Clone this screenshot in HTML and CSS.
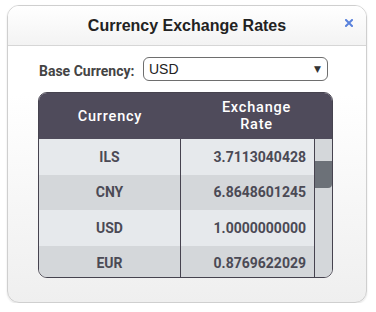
FILE: index.html
```html
<!DOCTYPE html>
<html>
<head>
<meta charset="utf-8">
<link rel="stylesheet" href="styles.css">
</head>
<body>
<div class="dialog">
  <div class="dialog-header">
    <h1 class="title">Currency Exchange Rates</h1>
    <svg class="close" width="8" height="8" viewBox="0 0 8 8"><path d="M1 1L7 7M7 1L1 7" stroke="#5a82dc" stroke-width="2" stroke-linecap="square" fill="none"/></svg>
  </div>
  <div class="dialog-body">
    <div class="base-row">
      <label class="base-label">Base Currency:</label>
      <div class="select"><span>USD</span><span class="arrow">&#9660;</span></div>
    </div>
    <div class="table">
      <div class="thead">
        <div class="th th-cur">Currency</div>
        <div class="th th-rate">Exchange<br>Rate</div>
      </div>
      <div class="tbody">
        <div class="rows">
          <div class="row odd"><div class="cell cur">ILS</div><div class="cell rate">3.7113040428</div></div>
          <div class="row even"><div class="cell cur">CNY</div><div class="cell rate">6.8648601245</div></div>
          <div class="row odd"><div class="cell cur">USD</div><div class="cell rate">1.0000000000</div></div>
          <div class="row even"><div class="cell cur">EUR</div><div class="cell rate">0.8769622029</div></div>
        </div>
        <div class="scrollbar"><div class="thumb"></div></div>
      </div>
    </div>
  </div>
</div>
</body>
</html>
```
FILE: styles.css
```css
html, body {
  margin: 0;
  padding: 0;
  background: #ffffff;
}
body {
  font-family: Roboto, "Liberation Sans", sans-serif;
}
.dialog {
  box-sizing: border-box;
  margin: 5px 0 0 7px;
  width: 360px;
  height: 298px;
  border: 1px solid #cfcfcf;
  border-radius: 12px;
  background: linear-gradient(#ffffff 30%, #efefef);
  box-shadow: 0 1px 2px rgba(0,0,0,0.12);
  overflow: hidden;
}
.dialog-header {
  position: relative;
  height: 39px;
  border-bottom: 1px solid #d6d6d6;
  background: linear-gradient(#ffffff, #f3f3f3);
  display: flex;
  align-items: center;
  justify-content: center;
}
.title {
  margin: 0;
  font-family: "Liberation Sans", Arial, sans-serif;
  font-size: 16px;
  font-weight: 700;
  color: #222222;
  padding-top: 1px;
}
.close {
  position: absolute;
  right: 13px;
  top: 13px;
}
.dialog-body {
  padding: 11px 0 0 31px;
}
.base-row {
  display: flex;
  align-items: center;
  height: 24px;
}
.base-label {
  font-size: 14px;
  font-weight: 700;
  color: #444444;
  width: 104px;
  padding-top: 4px;
}
.select {
  box-sizing: border-box;
  width: 185px;
  height: 24px;
  border: 1px solid #6e6e6e;
  border-radius: 6px;
  display: flex;
  align-items: center;
  justify-content: space-between;
  padding: 0 6px 0 5px;
  font-family: "Liberation Sans", Arial, sans-serif;
  font-size: 14px;
  color: #222;
  background: #fff;
}
.arrow {
  font-size: 9px;
  color: #333;
  font-family: "DejaVu Sans", sans-serif;
}
.table {
  box-sizing: border-box;
  margin: 11px 0 0 -1px;
  width: 295px;
  height: 186px;
  border: 1px solid #46434f;
  border-radius: 9px;
  overflow: hidden;
  display: flex;
  flex-direction: column;
}
.thead {
  display: flex;
  height: 46px;
  background: #4f4b5b;
  color: #ffffff;
  font-weight: 500;
  font-size: 14.5px;
  letter-spacing: 0.8px;
  line-height: 17px;
}
.th {
  display: flex;
  align-items: center;
  justify-content: center;
  text-align: center;
}
.th-cur { width: 142px; }
.th-rate { flex: 1; padding-bottom: 1px; }
.tbody {
  flex: 1;
  display: flex;
  overflow: hidden;
}
.rows {
  width: 276px;
}
.row {
  display: flex;
  height: 35.5px;
}
.row.odd { background: #e6e9ec; }
.row.even { background: #d4d7da; }
.cell {
  display: flex;
  align-items: center;
  font-size: 14px;
  font-weight: 700;
  color: #4b4a55;
}
.cur {
  width: 141px;
  justify-content: center;
  border-right: 1px solid #46434f;
}
.rate {
  flex: 1;
  justify-content: flex-end;
  padding-right: 8px;
  border-right: 1px solid #46434f;
}
.scrollbar {
  flex: 1;
  background: #d4d7da;
  padding-top: 22px;
}
.thumb {
  height: 27px;
  background: #6c7178;
  border-bottom-right-radius: 4px;
}
```
